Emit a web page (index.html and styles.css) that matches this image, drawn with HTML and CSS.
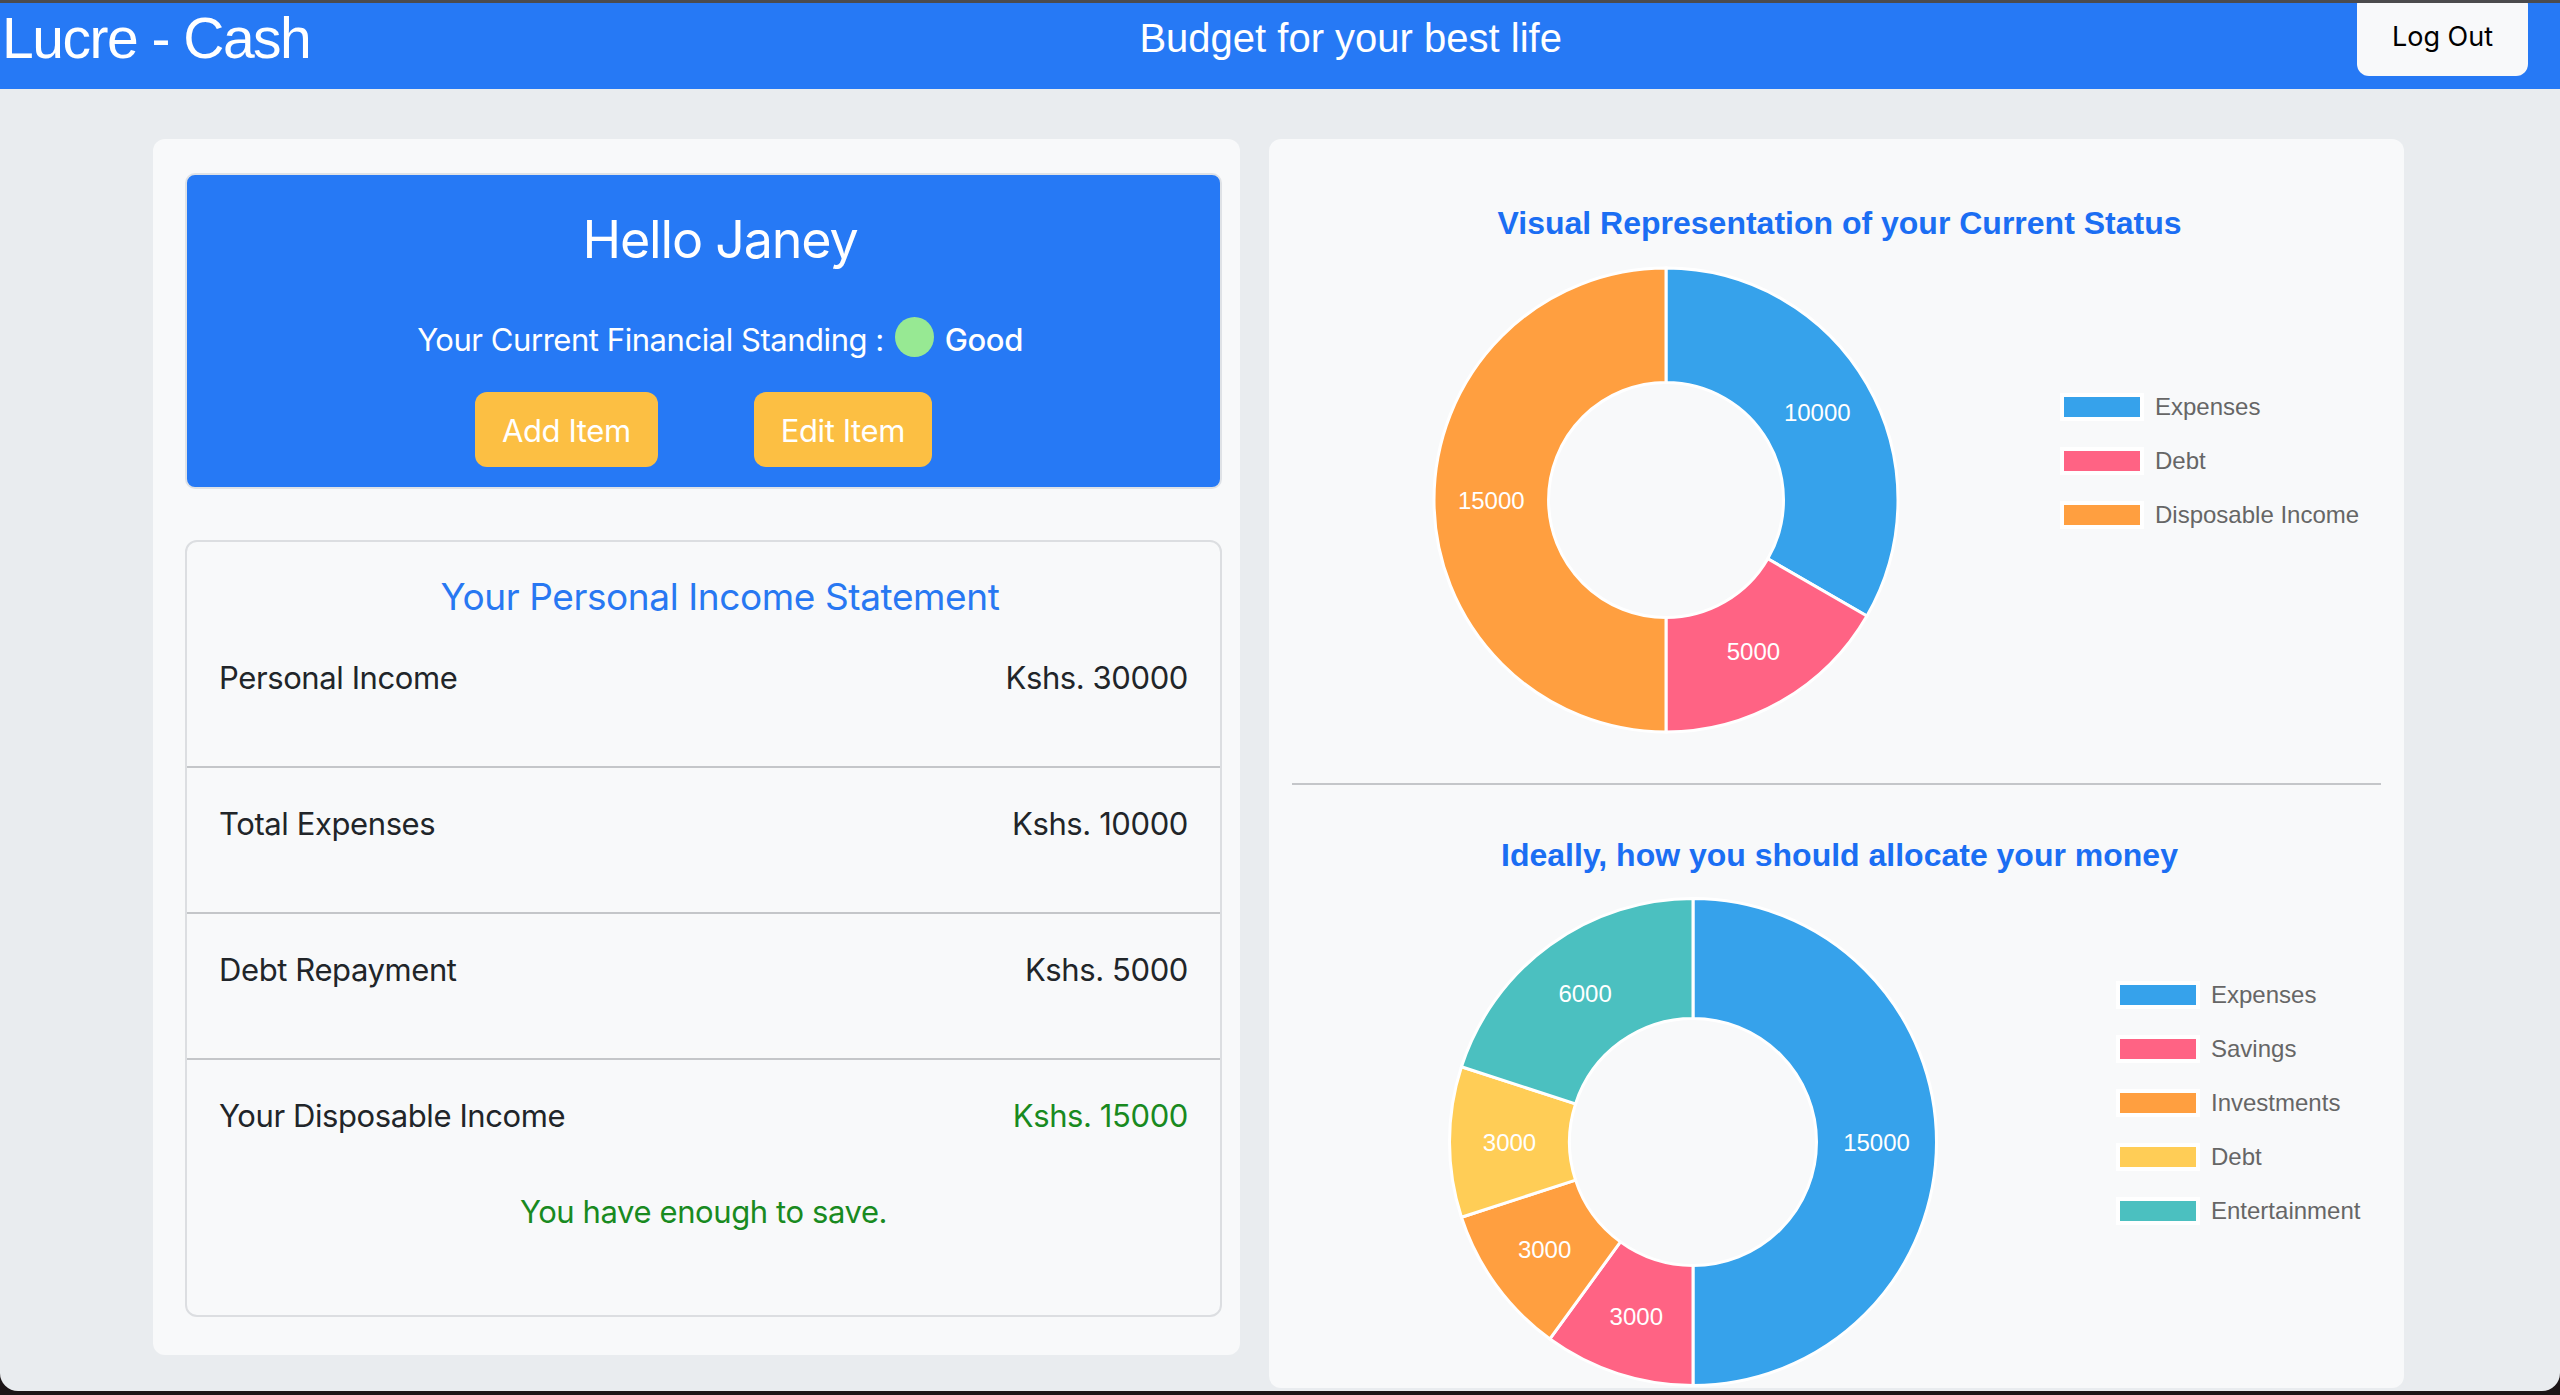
FILE: index.html
```html
<!DOCTYPE html>
<html lang="en">
<head>
<meta charset="utf-8">
<title>Lucre - Cash</title>
<link rel="stylesheet" href="styles.css">
</head>
<body>
<div class="screen">
  <header class="navbar">
    <div class="brand">Lucre - Cash</div>
    <div class="tagline">Budget for your best life</div>
    <button class="logout">Log Out</button>
  </header>

  <main class="content">
    <section class="left-card">
      <div class="hello-box">
        <h3 class="hello">Hello Janey</h3>
        <div class="standing">
          <span>Your Current Financial Standing :</span>
          <span class="dot"></span>
          <span class="good">Good</span>
        </div>
        <div class="actions">
          <button class="btn-warning">Add Item</button>
          <button class="btn-warning">Edit Item</button>
        </div>
      </div>

      <div class="statement">
        <div class="stmt-item">
          <h4 class="stmt-title">Your Personal Income Statement</h4>
          <div class="stmt-row"><span>Personal Income</span><span>Kshs. 30000</span></div>
        </div>
        <div class="stmt-item">
          <div class="stmt-row"><span>Total Expenses</span><span>Kshs. 10000</span></div>
        </div>
        <div class="stmt-item">
          <div class="stmt-row"><span>Debt Repayment</span><span>Kshs. 5000</span></div>
        </div>
        <div class="stmt-item last">
          <div class="stmt-row"><span>Your Disposable Income</span><span class="positive">Kshs. 15000</span></div>
          <p class="message">You have enough to save.</p>
        </div>
      </div>
    </section>

    <section class="right-card">
      <h5 class="chart-title">Visual Representation of your Current Status</h5>
      <div class="chart-row first">
        <svg class="donut d1" viewBox="0 0 468 468" width="468" height="468">
          <path class="seg c-blue" d="M234 2 A232 232 0 0 1 434.92 350 L335.76 292.75 A117.5 117.5 0 0 0 234 116.5 Z"/>
          <path class="seg c-pink" d="M434.92 350 A232 232 0 0 1 234 466 L234 351.5 A117.5 117.5 0 0 0 335.76 292.75 Z"/>
          <path class="seg c-orange" d="M234 466 A232 232 0 0 1 234 2 L234 116.5 A117.5 117.5 0 0 0 234 351.5 Z"/>
          <text class="dl" x="385.3" y="146.6">10000</text>
          <text class="dl" x="321.4" y="385.3">5000</text>
          <text class="dl" x="59.3" y="234">15000</text>
        </svg>
        <ul class="legend l1">
          <li><span class="swatch c-blue"></span>Expenses</li>
          <li><span class="swatch c-pink"></span>Debt</li>
          <li><span class="swatch c-orange"></span>Disposable Income</li>
        </ul>
      </div>

      <hr class="divider">

      <h5 class="chart-title second-title">Ideally, how you should allocate your money</h5>
      <div class="chart-row second">
        <svg class="donut d2" viewBox="0 0 490 490" width="490" height="490">
          <path class="seg c-blue" d="M245 1.5 A243.5 243.5 0 0 1 245 488.5 L245 368.5 A123.5 123.5 0 0 0 245 121.5 Z"/>
          <path class="seg c-pink" d="M245 488.5 A243.5 243.5 0 0 1 101.88 441.99 L172.41 344.91 A123.5 123.5 0 0 0 245 368.5 Z"/>
          <path class="seg c-orange" d="M101.88 441.99 A243.5 243.5 0 0 1 13.42 320.25 L127.54 283.16 A123.5 123.5 0 0 0 172.41 344.91 Z"/>
          <path class="seg c-yellow" d="M13.42 320.25 A243.5 243.5 0 0 1 13.42 169.75 L127.54 206.84 A123.5 123.5 0 0 0 127.54 283.16 Z"/>
          <path class="seg c-teal" d="M13.42 169.75 A243.5 243.5 0 0 1 245 1.5 L245 121.5 A123.5 123.5 0 0 0 127.54 206.84 Z"/>
          <text class="dl" x="428.5" y="245">15000</text>
          <text class="dl" x="188.3" y="419.5">3000</text>
          <text class="dl" x="96.6" y="352.9">3000</text>
          <text class="dl" x="61.5" y="245">3000</text>
          <text class="dl" x="137.1" y="96.6">6000</text>
        </svg>
        <ul class="legend l2">
          <li><span class="swatch c-blue"></span>Expenses</li>
          <li><span class="swatch c-pink"></span>Savings</li>
          <li><span class="swatch c-orange"></span>Investments</li>
          <li><span class="swatch c-yellow"></span>Debt</li>
          <li><span class="swatch c-teal"></span>Entertainment</li>
        </ul>
      </div>
    </section>
  </main>
</div>
</body>
</html>
```

FILE: styles.css
```css
html, body {
  margin: 0;
  padding: 0;
  background: #1c1517;
}

.screen {
  width: 2560px;
  height: 1391px;
  box-sizing: border-box;
  border-top: 3px solid #4b4b4d;
  background: #e9ecef;
  border-radius: 0 0 18px 18px;
  overflow: hidden;
  font-family: Inter, "Liberation Sans", sans-serif;
  color: #212529;
}

/* ---------- navbar ---------- */
.navbar {
  display: flex;
  align-items: flex-start;
  justify-content: space-between;
  height: 86px;
  box-sizing: border-box;
  padding: 0 32px 0 2px;
  background: #2679f5;
  color: #fff;
}

.brand {
  font-family: "Liberation Sans", Arial, sans-serif;
  font-size: 57px;
  line-height: 64px;
  letter-spacing: -1.5px;
  margin-top: 3px;
  margin-right: 34px;
}

.tagline {
  font-family: "Liberation Sans", Arial, sans-serif;
  font-size: 40px;
  line-height: 48px;
  margin-top: 11px;
}

.logout {
  margin-top: -10px;
  width: 171px;
  padding: 23px 0 18px;
  font-family: Inter, sans-serif;
  font-size: 27px;
  line-height: 42px;
  background: #f8f9fa;
  color: #000;
  border: 0;
  border-radius: 12px;
}

/* ---------- layout ---------- */
.content {
  display: flex;
  align-items: flex-start;
  gap: 29px;
  padding: 50px 0 0 153px;
}

.left-card {
  width: 1087px;
  box-sizing: border-box;
  padding: 34px 18px 38px 32px;
  background: #f8f9fa;
  border-radius: 12px;
}

/* ---------- hello box ---------- */
.hello-box {
  background: #2679f5;
  border: 2px solid #dfe2e6;
  border-radius: 10px;
  padding: 33px 0 20px;
  text-align: center;
  color: #fff;
}

.hello {
  margin: 0;
  padding-left: 33px;
  font-size: 52px;
  line-height: 64px;
  font-weight: 400;
  letter-spacing: -1.2px;
}

.standing {
  display: flex;
  justify-content: center;
  align-items: center;
  gap: 11px;
  margin-top: 44px;
  padding-left: 33px;
  font-size: 31px;
  line-height: 48px;
  letter-spacing: -0.45px;
}

.dot {
  width: 39px;
  height: 40px;
  border-radius: 50%;
  background: #97e993;
  margin-bottom: 7px;
}

.good {
  font-weight: 500;
}

.actions {
  display: flex;
  justify-content: center;
  gap: 96px;
  margin-top: 28px;
}

.btn-warning {
  background: #fcbf43;
  color: #fff;
  border: 0;
  border-radius: 12px;
  font-family: Inter, sans-serif;
  font-size: 31px;
  line-height: 47px;
  letter-spacing: -0.4px;
  padding: 15px 27px 13px;
}

/* ---------- statement ---------- */
.statement {
  margin-top: 51px;
  border: 2px solid #dcdee1;
  border-radius: 12px;
}

.stmt-item {
  padding: 32px;
}

.stmt-item + .stmt-item {
  border-top: 2px solid #c4c6c9;
}

.stmt-title {
  margin: 0 0 34px;
  padding-left: 33px;
  font-size: 37px;
  line-height: 46px;
  font-weight: 400;
  text-align: center;
  color: #2878f2;
  letter-spacing: -0.4px;
}

.stmt-row {
  display: flex;
  justify-content: space-between;
  font-size: 31px;
  line-height: 48px;
  letter-spacing: -0.4px;
  margin-bottom: 32px;
}

.last .stmt-row {
  margin-bottom: 48px;
}

.positive {
  color: #198a1f;
}

.message {
  margin: 0 0 47px;
  text-align: center;
  color: #198a1f;
  font-size: 31px;
  line-height: 48px;
  letter-spacing: -0.4px;
}

/* ---------- right card ---------- */
.right-card {
  width: 1135px;
  box-sizing: border-box;
  padding: 65px 23px 1px;
  background: #f8f9fa;
  border-radius: 12px;
}

.chart-title {
  margin: 0;
  padding-left: 6px;
  font-family: "Liberation Sans", Arial, sans-serif;
  font-weight: 700;
  font-size: 32px;
  line-height: 38px;
  text-align: center;
  color: #1b6ef3;
}

.second-title {
  margin-top: 51px;
}

.chart-row {
  display: flex;
  align-items: flex-start;
}

.chart-row.first {
  margin-top: 24px;
}

.chart-row.second {
  margin-top: 23px;
}

.donut {
  display: block;
  flex: none;
}

.d1 {
  margin-left: 140px;
}

.d2 {
  margin-left: 156px;
}

.seg {
  stroke: #fff;
  stroke-width: 3;
}

.dl {
  font-family: "Liberation Sans", Arial, sans-serif;
  font-size: 24px;
  fill: #fff;
  text-anchor: middle;
  dominant-baseline: central;
}

path.c-blue { fill: #36a2eb; }
path.c-pink { fill: #ff6384; }
path.c-orange { fill: #ff9f40; }
path.c-yellow { fill: #ffcd56; }
path.c-teal { fill: #4bc0c0; }

.legend {
  list-style: none;
  padding: 0;
  font-family: "Liberation Sans", Arial, sans-serif;
  font-size: 24px;
  color: #666;
}

.l1 {
  margin: 114px 0 0 160px;
}

.l2 {
  margin: 71px 0 0 178px;
}

.legend li {
  display: flex;
  align-items: center;
  gap: 11px;
  height: 54px;
  white-space: nowrap;
}

.swatch {
  width: 76px;
  height: 20px;
  border: 4px solid #fff;
  flex: none;
}

.swatch.c-blue { background: #36a2eb; }
.swatch.c-pink { background: #ff6384; }
.swatch.c-orange { background: #ff9f40; }
.swatch.c-yellow { background: #ffcd56; }
.swatch.c-teal { background: #4bc0c0; }

.divider {
  margin: 49px 0 0;
  border: 0;
  border-top: 2px solid #c4c6c9;
  height: 0;
}
```
